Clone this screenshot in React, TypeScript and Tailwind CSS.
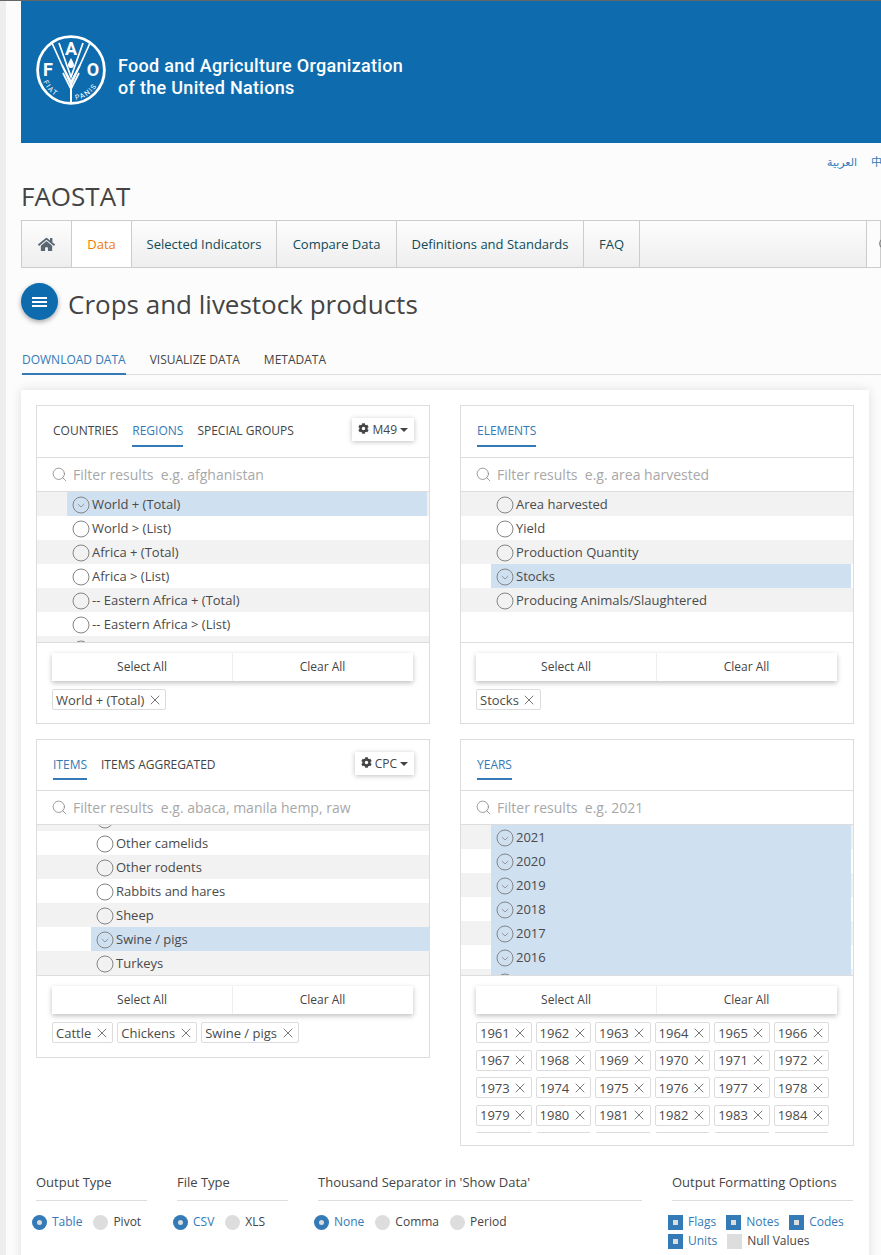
import React from 'react';
import { FaCog, FaHome } from 'react-icons/fa';
import { Search, X } from 'lucide-react';

const FONT = { fontFamily: '"Open Sans", sans-serif' };

const FaoLogo = () => (
  <svg viewBox="0 0 70 70" className="w-[70px] h-[70px] shrink-0" fill="none" stroke="#fff">
    <circle cx="35" cy="35" r="33.4" strokeWidth="2.8" />
    {/* wheat ear */}
    <path d="M16 8 L35 50 L54 8" strokeWidth="1.700" />
    <path d="M23 8 L35 42 L47 8" strokeWidth="1.700" />
    <path d="M26 30 L35 47 L44 30" strokeWidth="1.700" />
    <path d="M27 38 L35 54 L43 38" strokeWidth="1.700" />
    <path d="M35 50 V67" strokeWidth="2" />
    <path d="M35 23 C33.500 26 32 28 32 30 A3 3 0 0 0 38 30 C38 28 36.500 26 35 23Z" fill="#fff" stroke="none" />
    <text x="35" y="20" textAnchor="middle" fontSize="18" fontWeight="700" fill="#fff" stroke="#0e6cae" strokeWidth="0.6" paintOrder="stroke" fontFamily="Roboto, sans-serif">A</text>
    <text x="12" y="41" textAnchor="middle" fontSize="18" fontWeight="700" fill="#fff" stroke="none" fontFamily="Roboto, sans-serif">F</text>
    <text x="57" y="41" textAnchor="middle" fontSize="18" fontWeight="700" fill="#fff" stroke="none" fontFamily="Roboto, sans-serif">O</text>
    <path id="fao-arc" d="M6 43 A30 30 0 0 0 64 43" stroke="none" />
    <text fontSize="7" fill="#fff" stroke="none" letterSpacing="1.400" fontFamily="Roboto, sans-serif">
      <textPath href="#fao-arc" startOffset="5%">FIAT</textPath>
    </text>
    <text fontSize="7" fill="#fff" stroke="none" letterSpacing="1.400" fontFamily="Roboto, sans-serif">
      <textPath href="#fao-arc" startOffset="56%">PANIS</textPath>
    </text>
  </svg>
);

const Ring = ({ checked }: { checked?: boolean }) => (
  <svg viewBox="0 0 18 18" className="w-[18px] h-[18px] shrink-0" fill="none" stroke="#858585">
    <circle cx="9" cy="9" r="8" strokeWidth="1" />
    {checked && <path d="M5.800 8 L9 11 L12.200 8" strokeWidth="0.800" />}
  </svg>
);

const Row = ({ label, selected, odd, indent, trimRight }: { label: string; selected?: boolean; odd: boolean; indent: 'small' | 'large'; trimRight?: boolean }) => (
  <div className={`h-6 shrink-0 flex ${odd ? 'bg-[#f2f2f2]' : 'bg-white'}`}>
    <div
      className={`flex-1 flex items-center gap-[2px] pl-[5px] pt-[1px] ${indent === 'small' ? 'ml-[30px]' : 'ml-[54px]'} ${trimRight ? 'mr-[2px]' : ''} ${selected ? 'bg-[#cfe0f1]' : ''}`}
    >
      <Ring checked={selected} />
      <span className="text-[13px] text-[#4a4a4a] whitespace-pre">{label}</span>
    </div>
  </div>
);

const Tag = ({ label }: { label: string }) => (
  <span className="h-[21px] shrink-0 inline-flex items-center border border-[#dcdcdc] rounded-[2px] bg-white pl-[3px] pr-[6px] pt-[2px] gap-[6px] text-[13px] text-[#4a4a4a]">
    {label}
    <X size={16} strokeWidth={1.2} color="#555" className="-mx-[3.500px] -mt-[2px]" />
  </span>
);

const Tab = ({ label, active, short }: { label: string; active?: boolean; short?: boolean }) => (
  <span className={`block pt-[17px] leading-[16px] text-[12px] border-b-2 ${short ? 'h-[40px]' : 'h-[41px]'} ${active ? 'text-[#337ab7] border-[#337ab7]' : 'text-[#444] border-transparent'}`}>
    {label}
  </span>
);

const CodeButton = ({ label }: { label: string }) => (
  <div className="ml-auto mr-[15px] mt-[12px] h-[23px] bg-white shadow-[0_1px_5px_rgba(0,0,0,0.25)] flex items-center gap-[3px] px-[6px] text-[12px] text-[#444]">
    <FaCog size={11} className="-mt-[2px]" />
    {label}
    <span className="w-0 h-0 border-x-[4px] border-x-transparent border-t-[4px] border-t-[#444]" />
  </div>
);

const SearchBar = ({ hint }: { hint: string }) => (
  <div className="h-[34px] border-b border-[#ddd] flex items-center gap-[6px] pl-[16px] bg-white">
    <Search size={17} strokeWidth={1} color="#777" className="-ml-[2px] -mr-[1px]" />
    <span className="text-[14px] text-[#a8a8a8] whitespace-pre">{`Filter results  ${hint}`}</span>
  </div>
);

const SelectButtons = () => (
  <div className="flex mx-[15px] mt-[10px] h-[28px] w-[361px] text-[12px] text-[#444] shadow-[0_2px_5px_rgba(0,0,0,0.25)] bg-white">
    <div className="w-[180px] flex items-center justify-center">Select All</div>
    <div className="w-[181px] flex items-center justify-center border-l border-[#eee] pr-[1px]">Clear All</div>
  </div>
);

const regions = ['World + (Total)', 'World > (List)', 'Africa + (Total)', 'Africa > (List)', '-- Eastern Africa + (Total)', '-- Eastern Africa > (List)'];
const elements = ['Area harvested', 'Yield', 'Production Quantity', 'Stocks', 'Producing Animals/Slaughtered'];
const animals = ['Other camelids', 'Other rodents', 'Rabbits and hares', 'Sheep', 'Swine / pigs', 'Turkeys'];
const years = ['2021', '2020', '2019', '2018', '2017', '2016'];
const tagYears = Array.from({ length: 30 }, (_, i) => String(1961 + i));

const navItems = [
  { label: 'Selected Indicators', w: 'w-[145px]' },
  { label: 'Compare Data', w: 'w-[120px]' },
  { label: 'Definitions and Standards', w: 'w-[187px]' },
  { label: 'FAQ', w: 'w-[56px]' },
];

const RadioOpt = ({ label, on }: { label: string; on?: boolean }) => (
  <div className="flex items-center gap-[5px]">
    {on ? (
      <span className="w-[15px] h-[15px] rounded-full bg-[#337ab7] flex items-center justify-center">
        <span className="w-[5px] h-[5px] rounded-full bg-[#ddd]" />
      </span>
    ) : (
      <span className="w-[15px] h-[15px] rounded-full bg-[#ddd]" />
    )}
    <span className={`text-[12px] ${on ? 'text-[#337ab7]' : 'text-[#444]'}`}>{label}</span>
  </div>
);

const CheckOpt = ({ label, on }: { label: string; on?: boolean }) => (
  <div className="flex items-center gap-[5px]">
    {on ? (
      <span className="w-[15px] h-[15px] bg-[#337ab7] flex items-center justify-center">
        <span className="w-[5px] h-[5px] bg-[#ddd]" />
      </span>
    ) : (
      <span className="w-[15px] h-[15px] bg-[#ddd]" />
    )}
    <span className={`text-[12px] ${on ? 'text-[#337ab7]' : 'text-[#444]'}`}>{label}</span>
  </div>
);

const OptionHead = ({ title }: { title: string }) => (
  <div className="h-[29px] border-b border-[#ddd] text-[13px] text-[#444] flex items-start pt-[1px]">{title}</div>
);

export default function App() {
  return (
    <div className="flex w-[881px] h-[1255px] overflow-hidden bg-[#fcfcfc] border-t border-[#666]" style={FONT}>
      <div className="w-[6px] shrink-0 bg-[#eee]" />
      <main className="flex-1 min-w-0 pl-[15px]">
        {/* FAO banner */}
        <header className="h-[142px] bg-[#0e6cae] flex items-start pl-[15px] pt-[34px] gap-[12px]">
          <FaoLogo />
          <div className="pt-[20px] text-white text-[18px] leading-[22px] font-medium tracking-[0.3px]" style={{ fontFamily: 'Roboto, sans-serif' }}>
            Food and Agriculture Organization
            <br />
            of the United Nations
          </div>
        </header>

        {/* language links */}
        <div className="h-[37px] pl-[806px] pt-[2px] flex items-center gap-[14px] whitespace-nowrap text-[11px] text-[#337ab7]" style={{ fontFamily: '"Open Sans", "DejaVu Sans", "Noto Sans CJK SC", sans-serif' }}>
          <span>العربية</span>
          <span>中文</span>
        </div>

        <h1 className="h-[40px] text-[26px] leading-[32px] text-[#444]">FAOSTAT</h1>

        {/* main nav */}
        <nav className="h-[48px] flex border border-[#ccc] text-[13px] text-[#0e4a57] bg-gradient-to-b from-[#fdfdfd] to-[#eee]">
          <div className="w-[50px] shrink-0 border-r border-[#ccc] flex items-center justify-center text-[#5a6672]">
            <FaHome size={17} />
          </div>
          <div className="w-[60px] shrink-0 border-r border-[#ccc] bg-white flex items-center justify-center pt-[1px] text-[#f57c00]">Data</div>
          {navItems.map((item) => (
            <div key={item.label} className={`${item.w} shrink-0 border-r border-[#ccc] flex items-center justify-center pt-[1px]`}>
              {item.label}
            </div>
          ))}
          <div className="w-[227px] shrink-0 border-r border-[#ccc]" />
          <div className="flex-1 min-w-0 bg-[#fcfcfc] flex items-center pl-[11px]">
            <Search size={14} color="#777" className="shrink-0" />
          </div>
        </nav>

        {/* page title */}
        <div className="h-[74px] flex items-start gap-[10px] pt-[15px]">
          <button className="w-[37px] h-[37px] rounded-full bg-[#0e6cae] shadow-[0_2px_5px_rgba(0,0,0,0.35)] flex flex-col items-center justify-center gap-[2px]">
            <span className="w-[15px] h-[2px] bg-white" />
            <span className="w-[15px] h-[2px] bg-white" />
            <span className="w-[15px] h-[2px] bg-white" />
          </button>
          <h2 className="text-[26px] leading-[37px] mt-[3px] text-[#444]">Crops and livestock products</h2>
        </div>

        {/* download / visualize / metadata */}
        <div className="h-[33px] flex items-start gap-[24px] border-b border-[#ddd] pl-[1px] text-[12px]">
          <span className="h-[33px] pt-[9px] text-[#337ab7] border-b-2 border-[#337ab7]">DOWNLOAD DATA</span>
          <span className="pt-[9px] text-[#444]">VISUALIZE DATA</span>
          <span className="pt-[9px] text-[#444]">METADATA</span>
        </div>

        {/* main card */}
        <section className="mt-[15px] w-[848px] bg-white shadow-[0_0_10px_rgba(0,0,0,0.12)] px-[15px] pt-[15px] pb-[60px]">
          <div className="flex gap-[30px] items-start">
            <div className="w-[394px] flex flex-col gap-[15px]">
              {/* areas */}
              <div className="border border-[#ddd] bg-white">
                <div className="h-[52px] border-b border-[#ddd] flex items-start gap-[14px] pl-[16px]">
                  <Tab label="COUNTRIES" />
                  <Tab label="REGIONS" active />
                  <Tab label="SPECIAL GROUPS" />
                  <CodeButton label="M49" />
                </div>
                <SearchBar hint="e.g. afghanistan" />
                <div className="h-[151px] border-b border-[#ddd] overflow-hidden flex flex-col">
                  {regions.map((r, i) => (
                    <Row key={r} label={r} odd={i % 2 === 0} selected={i === 0} indent="small" trimRight />
                  ))}
                  <Row label=" " odd indent="small" trimRight />
                </div>
                <SelectButtons />
                <div className="flex mx-[15px] mt-[8px] mb-[13px]">
                  <Tag label="World + (Total)" />
                </div>
              </div>

              {/* items */}
              <div className="border border-[#ddd] bg-white">
                <div className="h-[51px] border-b border-[#ddd] flex items-start gap-[14px] pl-[16px]">
                  <Tab label="ITEMS" active short />
                  <Tab label="ITEMS AGGREGATED" short />
                  <CodeButton label="CPC" />
                </div>
                <SearchBar hint="e.g. abaca, manila hemp, raw" />
                <div className="h-[151px] border-b border-[#ddd] overflow-hidden flex flex-col">
                  <div className="-mt-[18px]">
                    <Row label=" " odd indent="large" />
                  </div>
                  {animals.map((a, i) => (
                    <Row key={a} label={a} odd={i % 2 === 1} selected={a === 'Swine / pigs'} indent="large" />
                  ))}
                </div>
                <SelectButtons />
                <div className="flex gap-[4px] mx-[15px] mt-[8px] mb-[14px]">
                  <Tag label="Cattle" />
                  <Tag label="Chickens" />
                  <Tag label="Swine / pigs" />
                </div>
              </div>
            </div>

            <div className="w-[394px] flex flex-col gap-[15px]">
              {/* elements */}
              <div className="border border-[#ddd] bg-white">
                <div className="h-[52px] border-b border-[#ddd] flex items-start pl-[16px]">
                  <Tab label="ELEMENTS" active />
                </div>
                <SearchBar hint="e.g. area harvested" />
                <div className="h-[151px] border-b border-[#ddd] overflow-hidden flex flex-col">
                  {elements.map((e, i) => (
                    <Row key={e} label={e} odd={i % 2 === 0} selected={e === 'Stocks'} indent="small" trimRight />
                  ))}
                </div>
                <SelectButtons />
                <div className="flex mx-[15px] mt-[8px] mb-[13px]">
                  <Tag label="Stocks" />
                </div>
              </div>

              {/* years */}
              <div className="border border-[#ddd] bg-white">
                <div className="h-[51px] border-b border-[#ddd] flex items-start pl-[16px]">
                  <Tab label="YEARS" active short />
                </div>
                <SearchBar hint="e.g. 2021" />
                <div className="h-[151px] border-b border-[#ddd] overflow-hidden flex flex-col">
                  {[...years, ' '].map((y, i) => (
                    <Row key={y} label={y} odd={i % 2 === 0} selected indent="small" trimRight />
                  ))}
                </div>
                <SelectButtons />
                <div className="flex flex-wrap content-start gap-x-[3.800px] gap-y-[6.500px] h-[111px] overflow-hidden mx-[15px] mt-[8px] mb-[12px]">
                  {tagYears.map((y) => (
                    <Tag key={y} label={y} />
                  ))}
                </div>
              </div>
            </div>
          </div>

          {/* output options */}
          <div className="grid grid-cols-[111px_111px_324px_181px] gap-x-[30px] mt-[26px]">
            <div>
              <OptionHead title="Output Type" />
              <div className="flex gap-[11px] -ml-1 mt-[12px]">
                <RadioOpt label="Table" on />
                <RadioOpt label="Pivot" />
              </div>
            </div>
            <div>
              <OptionHead title="File Type" />
              <div className="flex gap-[11px] -ml-1 mt-[12px]">
                <RadioOpt label="CSV" on />
                <RadioOpt label="XLS" />
              </div>
            </div>
            <div>
              <OptionHead title="Thousand Separator in 'Show Data'" />
              <div className="flex gap-[11px] -ml-1 mt-[12px]">
                <RadioOpt label="None" on />
                <RadioOpt label="Comma" />
                <RadioOpt label="Period" />
              </div>
            </div>
            <div>
              <OptionHead title="Output Formatting Options" />
              <div className="flex gap-[10px] -ml-1 mt-[12px]">
                <CheckOpt label="Flags" on />
                <CheckOpt label="Notes" on />
                <CheckOpt label="Codes" on />
              </div>
              <div className="flex gap-[10px] -ml-1 mt-[1px]">
                <CheckOpt label="Units" on />
                <CheckOpt label="Null Values" />
              </div>
            </div>
          </div>
        </section>
      </main>
    </div>
  );
}
